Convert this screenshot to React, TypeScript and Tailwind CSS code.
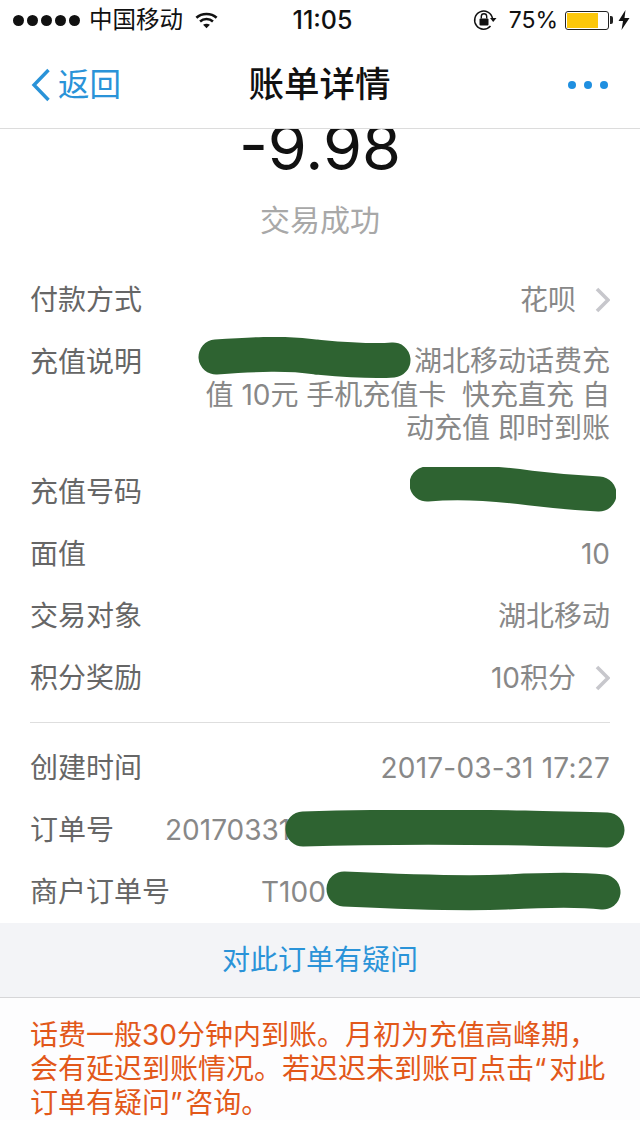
import type { ReactNode } from 'react';

const FONT = "font-['Inter','Noto_Sans_CJK_SC',sans-serif]";

function WifiIcon() {
  return (
    <svg width="23" height="19" viewBox="0 0 25 20" fill="none" stroke="#111" strokeWidth="2.8">
      <path d="M1.5 7 C7.5 1.5 17.5 1.5 23.5 7" />
      <path d="M5.5 11 C9.5 7.5 15.5 7.5 19.5 11" />
      <path d="M12.5 18.5 L8.8 14.6 C10.8 13 14.2 13 16.2 14.6 Z" fill="#111" stroke="none" />
    </svg>
  );
}

function LockRotationIcon() {
  return (
    <svg width="24" height="22" viewBox="0 0 24 22" fill="none">
      <path d="M19.5 9.5 A9 9 0 1 0 17.5 17" stroke="#111" strokeWidth="1.5" />
      <path d="M17 9 L23.5 9 L20.2 13 Z" fill="#111" />
      <rect x="6.5" y="9.5" width="9" height="7" rx="1" fill="#111" />
      <path d="M8.3 9.5 V7.5 A2.7 2.7 0 0 1 13.7 7.5 V9.5" stroke="#111" strokeWidth="1.4" />
    </svg>
  );
}

function Battery() {
  return (
    <div className="flex items-center">
      <div className="h-[19px] w-[44px] rounded-[3px] border border-[#222] p-[1px]">
        <div className="h-full w-[31px] bg-[#fcc70a]" />
      </div>
      <div className="ml-[1px] h-[8px] w-[3px] rounded-r-[2px] bg-[#222]" />
    </div>
  );
}

function BoltIcon() {
  return (
    <svg width="12" height="20" viewBox="0 0 12 20" fill="#111">
      <path d="M7.5 0 L0.5 11 H5 L3.5 20 L11.5 8 H6.5 Z" />
    </svg>
  );
}

function StatusBar() {
  return (
    <div className="flex h-[40px] items-center justify-between pl-[13px] pr-[10px] text-[#111]">
      <div className="flex w-[240px] items-center">
        <div className="flex gap-[3px]">
          {[0, 1, 2, 3, 4].map((i) => (
            <span key={i} className="h-[11px] w-[11px] rounded-full bg-[#111]" />
          ))}
        </div>
        <span className="ml-[9px] text-[23.5px] leading-none">中国移动</span>
        <span className="ml-[12px]"><WifiIcon /></span>
      </div>
      <span className="ml-[2px] text-[25px] font-medium leading-none">11:05</span>
      <div className="flex w-[240px] items-center justify-end">
        <LockRotationIcon />
        <span className="ml-[12px] text-[23px] leading-none">75%</span>
        <span className="ml-[7px]"><Battery /></span>
        <span className="ml-[5px]"><BoltIcon /></span>
      </div>
    </div>
  );
}

function NavBar() {
  return (
    <div className="flex h-[89px] items-center justify-between border-b border-[#dcdcdc] pt-[1px] pl-[31px] pr-[32px]">
      <div className="flex w-[150px] items-center text-[#2a93d8]">
        <svg width="20" height="34" viewBox="0 0 20 34" fill="none" stroke="currentColor" strokeWidth="3.4">
          <path d="M17.5 2 L3 17 L17.5 32" />
        </svg>
        <span className="ml-[7px] text-[31.5px] leading-none">返回</span>
      </div>
      <span className="text-[35.5px] font-medium leading-none text-[#111]">账单详情</span>
      <div className="flex w-[150px] justify-end gap-[8px]">
        {[0, 1, 2].map((i) => (
          <span key={i} className="h-[8px] w-[8px] rounded-full bg-[#1f8fe0]" />
        ))}
      </div>
    </div>
  );
}

function Row({ label, value, arrow, className }: { label: string; value?: ReactNode; arrow?: boolean; className?: string }) {
  return (
    <div className={`flex h-[62px] items-center justify-between ${className ?? ''}`}>
      <span className="text-[#666]">{label}</span>
      <span className="flex items-center text-[#888]">
        {value}
        {arrow && (
          <svg className="ml-[19px]" width="15" height="26" viewBox="0 0 15 26" fill="none" stroke="#c7c7cc" strokeWidth="3.6">
            <path d="M2 2 L13 13 L2 24" />
          </svg>
        )}
      </span>
    </div>
  );
}

// green marker strokes that hide private data in the screenshot
function Scribble({ className, width, height, d, strokeWidth }: { className: string; width: number; height: number; d: string; strokeWidth: number }) {
  return (
    <svg className={`absolute ${className}`} width={width} height={height} viewBox={`0 0 ${width} ${height}`} fill="none" stroke="#2e6331" strokeWidth={strokeWidth} strokeLinecap="round" strokeLinejoin="round">
      <path d={d} />
    </svg>
  );
}

export default function App() {
  return (
    <div className={`relative h-[1136px] w-[640px] overflow-hidden bg-white ${FONT}`}>
      <StatusBar />
      <NavBar />

      <div className="h-[794px] overflow-hidden">
        <div className="-mt-[18px] text-center text-[63px] font-normal leading-[72px] text-[#111]">-9.98</div>
        <div className="mt-[17px] text-center text-[30px] leading-[40px] text-[#a8a8a8]">交易成功</div>

        <div className="mt-[29px] px-[30px] text-[28px] leading-[34px]">
          <Row label="付款方式" value="花呗" arrow />
          <div className="relative flex h-[130px] items-start justify-between pt-[14px]">
            <span className="text-[#666]">充值说明</span>
            <span className="whitespace-nowrap text-right leading-[33.5px] text-[#888]">
              湖北移动话费充<br />
              值 10元 手机充值卡&nbsp; 快充直充 自<br />
              动充值 即时到账
            </span>
            <Scribble className="left-[168px] top-[6px]" width={214} height={42} strokeWidth={35} d="M18 20 C60 17 90 16 118 20 C140 22 170 25 195 23" />
          </div>
          <div className="relative">
            <Row label="充值号码" />
            <Scribble className="left-[380px] top-[6px]" width={206} height={46} strokeWidth={35} d="M17 17 C50 14 90 17 120 21 C145 24 170 26 189 27" />
          </div>
          <Row label="面值" value="10" />
          <Row label="交易对象" value="湖北移动" />
          <Row label="积分奖励" value="10积分" arrow />
          <div className="mt-[13px] border-t border-[#dedede]" />
          <Row label="创建时间" value={<span className="tracking-[0.2px]">2017-03-31 17:27</span>} className="mt-[14px]" />
          <div className="relative">
            <div className="flex h-[62px] items-center">
              <span className="text-[#666]">订单号</span>
              <span className="ml-[51px] text-[#888]">20170331</span>
            </div>
            <Scribble className="left-[255px] top-[11px]" width={340} height={38} strokeWidth={35} d="M18 19 C80 17 180 17 240 18 C270 19 295 19 322 20" />
          </div>
          <div className="relative">
            <div className="flex h-[62px] items-center">
              <span className="text-[#666]">商户订单号</span>
              <span className="ml-[91px] text-[#888]">T100</span>
            </div>
            <Scribble className="left-[296px] top-[9px]" width={296} height={42} strokeWidth={35} d="M18 19 C60 21 130 24 180 22 C220 20 250 19 277 22" />
          </div>
        </div>
      </div>

      <div className="flex h-[75px] items-center justify-center border-b border-[#d6d6d8] bg-[#f3f4f7] text-[28px] text-[#2a93d8]">
        对此订单有疑问
      </div>
      <div className="bg-[#fdfdfe] px-[30px] pt-[20px] text-[28px] leading-[34px] text-[#e2581a]">
        话费一般30分钟内到账。月初为充值高峰期，<br />
        会有延迟到账情况。若迟迟未到账可点击<span className="tracking-[3px]">“</span>对此<br />
        订单有疑问<span className="tracking-[3px]">”</span>咨询。
      </div>
    </div>
  );
}
